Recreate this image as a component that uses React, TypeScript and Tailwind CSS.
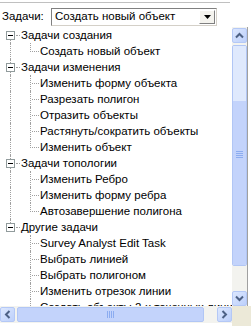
import React from "react";

type Group = { title: string; items: string[] };

const groups: Group[] = [
  { title: "Задачи создания", items: ["Создать новый объект"] },
  {
    title: "Задачи изменения",
    items: [
      "Изменить форму объекта",
      "Разрезать полигон",
      "Отразить объекты",
      "Растянуть/сократить объекты",
      "Изменить объект",
    ],
  },
  {
    title: "Задачи топологии",
    items: ["Изменить Ребро", "Изменить форму ребра", "Автозавершение полигона"],
  },
  {
    title: "Другие задачи",
    items: [
      "Survey Analyst Edit Task",
      "Выбрать линией",
      "Выбрать полигоном",
      "Изменить отрезок линии",
      "Создать объекты 2-х точечных линий",
    ],
  },
];

const dotV = "absolute w-0 border-l border-dotted border-[#a0a0a0]";
const dotH = "absolute h-0 border-t border-dotted border-[#a0a0a0]";

function GroupRow({ title, first, last }: { title: string; first: boolean; last: boolean }) {
  return (
    <div className="relative h-4 whitespace-nowrap">
      {!first && <div className={`${dotV} left-[10px] top-0 h-[4px]`} />}
      {!last && <div className={`${dotV} left-[10px] top-[13px] h-[3px]`} />}
      <div className="absolute left-[6px] top-[4px] flex h-[9px] w-[9px] items-center justify-center border border-[#919b9c] bg-white">
        <div className="h-px w-[5px] bg-black" />
      </div>
      <div className={`${dotH} left-[16px] top-[8px] w-[4px]`} />
      <span className="absolute left-[21px] top-0 leading-4">{title}</span>
    </div>
  );
}

function ItemRow({ text, lastGroup, lastItem }: { text: string; lastGroup: boolean; lastItem: boolean }) {
  return (
    <div className="relative h-4 whitespace-nowrap">
      {!lastGroup && <div className={`${dotV} left-[10px] top-0 h-4`} />}
      <div className={`${dotV} left-[30px] top-0 ${lastItem ? "h-[9px]" : "h-4"}`} />
      <div className={`${dotH} left-[32px] top-[8px] w-[7px]`} />
      <span className="absolute left-[40px] top-0 leading-4">{text}</span>
    </div>
  );
}

function Chevron({ dir }: { dir: "up" | "down" | "left" | "right" }) {
  const rot = { up: "rotate-0", down: "rotate-180", left: "-rotate-90", right: "rotate-90" }[dir];
  return (
    <svg width="9" height="9" viewBox="0 0 9 9" className={rot}>
      <path d="M1 6.5 L4.5 3 L8 6.5" fill="none" stroke="#4d6185" strokeWidth="2" />
    </svg>
  );
}

function ArrowBtn({ dir }: { dir: "up" | "down" | "left" | "right" }) {
  return (
    <div className="flex h-[15px] w-[15px] shrink-0 items-center justify-center rounded-[2px] border border-[#b4c8f6] bg-gradient-to-br from-[#dce7fe] to-[#bdd0fb]">
      <Chevron dir={dir} />
    </div>
  );
}

export default function App() {
  return (
    <div className="relative flex h-[326px] w-[251px] flex-col overflow-hidden bg-white text-[11.5px] text-black [font-family:'Liberation_Sans',Arial,sans-serif]">
      {/* header with task combo */}
      <div className="relative h-[27px] shrink-0">
        <div className="absolute left-0 top-[2px] h-px w-[230px] bg-[#c0c0c0]" />
        <div className="flex h-full items-center pl-[2px] pt-[7px]">
          <span className="w-[49px]">Задачи:</span>
          <div className="flex h-[18px] w-[166px] items-center border border-t-[#808080] border-l-[#808080] border-r-[#d4d0c8] border-b-[#d4d0c8]">
            <span className="flex-1 pl-[3px]">Создать новый объект</span>
            <div className="mr-px flex h-[14px] w-[16px] items-center justify-center border border-t-white border-l-white border-r-[#808080] border-b-[#808080] bg-[#f4f3ee]">
              <svg width="7" height="4" viewBox="0 0 7 4">
                <path d="M0 0 H7 L3.5 4 Z" fill="#000" />
              </svg>
            </div>
          </div>
        </div>
      </div>

      {/* tree + vertical scrollbar */}
      <div className="flex min-h-0 flex-1">
        <div className="min-w-0 flex-1 overflow-hidden">
          {groups.map((g, gi) => (
            <div key={g.title}>
              <GroupRow title={g.title} first={gi === 0} last={gi === groups.length - 1} />
              {g.items.map((it, ii) => (
                <ItemRow
                  key={it}
                  text={it}
                  lastGroup={gi === groups.length - 1}
                  lastItem={ii === g.items.length - 1}
                />
              ))}
            </div>
          ))}
        </div>
        <div className="flex w-[15px] shrink-0 flex-col bg-[#f3f3ef] pt-[1px]">
          <ArrowBtn dir="up" />
          <div className="flex-1 py-[2px]">
            <div className="flex h-[221px] flex-col overflow-hidden rounded-[2px] border border-[#b1c6f5]">
              <div className="h-[55px] bg-[#dfe9fd]" />
              <div className="flex flex-1 flex-col items-center bg-[#c3d3fb] pt-[50px]">
                <div className="flex flex-col gap-px">
                  <div className="h-px w-[7px] bg-[#8cacf0]" />
                  <div className="h-px w-[7px] bg-[#8cacf0]" />
                  <div className="h-px w-[7px] bg-[#8cacf0]" />
                  <div className="h-px w-[7px] bg-[#8cacf0]" />
                </div>
              </div>
            </div>
          </div>
          <ArrowBtn dir="down" />
        </div>
        <div className="w-[4px] shrink-0 border-l border-[#a0a0a0] bg-white" />
      </div>

      {/* horizontal scrollbar */}
      <div className="flex h-[20px] shrink-0 items-start">
        <div className="flex h-[17px] w-[232px] items-center bg-[#f3f3ef]">
          <ArrowBtn dir="left" />
          <div className="mx-[2px] flex h-[15px] w-[187px] items-center justify-center rounded-[2px] border border-[#b1c6f5] bg-[#c3d3fb]">
            <div className="flex gap-px">
              <div className="h-[7px] w-px bg-[#8cacf0]" />
              <div className="h-[7px] w-px bg-[#8cacf0]" />
              <div className="h-[7px] w-px bg-[#8cacf0]" />
              <div className="h-[7px] w-px bg-[#8cacf0]" />
            </div>
          </div>
          <div className="flex-1" />
          <ArrowBtn dir="right" />
        </div>
        <div className="h-full flex-1 bg-[#ece9d8]" />
      </div>
    </div>
  );
}
